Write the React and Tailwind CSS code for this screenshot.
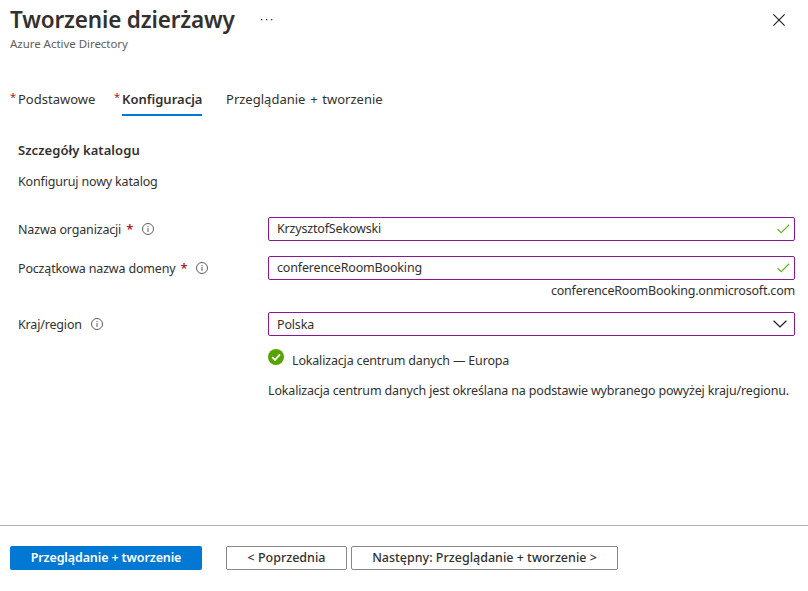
import React from "react";

function InfoIcon() {
  return (
    <svg width="12" height="12" viewBox="0 0 12 12" fill="none" className="shrink-0">
      <circle cx="6" cy="6" r="5.5" stroke="#605e5c" strokeWidth="1" />
      <path d="M6 5v4" stroke="#605e5c" strokeWidth="1" />
      <path d="M6 3v1.1" stroke="#605e5c" strokeWidth="1" />
    </svg>
  );
}

function ValidIcon() {
  return (
    <svg width="13" height="10" viewBox="0 0 13 10" fill="none" className="shrink-0">
      <path d="M0.6 5.2L4.2 8.6L12.2 0.8" stroke="#6bb02c" strokeWidth="1.2" />
    </svg>
  );
}

function Label({ children, required }) {
  return (
    <div className="flex h-6 w-[250px] shrink-0 items-center">
      <span className="pt-0.5">{children}</span>
      {required && <span className="ml-[5px] w-[7px] text-[13px] font-semibold text-[#a4262c]">*</span>}
      <span className="ml-[9px]">
        <InfoIcon />
      </span>
    </div>
  );
}

function Field({ children, icon, className = "" }) {
  return (
    <div className="flex h-6 w-[527px] items-center justify-between rounded-[2px] border border-[#881798] pr-1 pl-2">
      <span className={className}>{children}</span>
      {icon}
    </div>
  );
}

export default function App() {
  return (
    <div className="flex h-[591px] w-[808px] flex-col overflow-hidden bg-white font-['Noto_Sans',sans-serif] text-[12.5px] leading-[18px] tracking-[-0.17px] whitespace-nowrap text-[#323130]">
      <header className="flex h-[54px] justify-between pl-[10px]">
        <div>
          <div className="flex h-[35px] items-center">
            <h1 className="w-[250px] pt-[5px] text-[22.5px] leading-[34px] font-semibold tracking-[-0.16px]">Tworzenie dzierżawy</h1>
            <svg width="14" height="3" viewBox="0 0 14 3" className="mt-1">
              <path d="M1 1h1.3v1.3h-1.3zM6 1h1.3v1.3h-1.3zM11 1h1.3v1.3h-1.3z" fill="#323130" />
            </svg>
          </div>
          <p className="text-[11.5px] tracking-[-0.04px] text-[#605e5c]">Azure Active Directory</p>
        </div>
        <svg width="12" height="12" viewBox="0 0 12 12" className="mt-[14px] mr-[23px]">
          <path d="M0.4 0.4L11.6 11.6M11.6 0.4L0.4 11.6" stroke="#1b1a19" strokeWidth="1.1" />
        </svg>
      </header>

      <nav className="mt-[34px] flex h-7 pl-[10px] text-[13px] tracking-normal">
        <span className="w-2 text-[11px] text-[#a4262c]">*</span>
        <span className="h-7 w-24 pt-0.5">Podstawowe</span>
        <span className="w-2 text-[11px] text-[#a4262c]">*</span>
        <span className="h-7 w-20 border-b-2 border-[#0078d4] pt-0.5 font-semibold">Konfiguracja</span>
        <span className="ml-6 pt-0.5 tracking-[0.01px] [word-spacing:1.3px]">Przeglądanie + tworzenie</span>
      </nav>

      <main className="flex flex-1 flex-col pt-[25px] pl-[18px]">
        <h2 className="text-[13px] font-semibold tracking-[0.07px]">Szczegóły katalogu</h2>
        <p className="mt-[14px]">Konfiguruj nowy katalog</p>
        <div className="mt-[26px] flex">
          <Label required>Nazwa organizacji</Label>
          <Field icon={<ValidIcon />}>KrzysztofSekowski</Field>
        </div>
        <div className="mt-[15px] flex">
          <Label required>Początkowa nazwa domeny</Label>
          <Field icon={<ValidIcon />}>conferenceRoomBooking</Field>
        </div>
        <p className="mt-0.5 mr-[13px] text-right tracking-[-0.2px]">conferenceRoomBooking.onmicrosoft.com</p>
        <div className="mt-3 flex">
          <Label>Kraj/region</Label>
          <Field
            className="pt-px"
            icon={
              <svg width="14" height="8" viewBox="0 0 14 8" fill="none" className="mr-[3px]">
                <path d="M0.6 0.7L7 7L13.4 0.7" stroke="#1b1a19" strokeWidth="1.2" />
              </svg>
            }
          >
            Polska
          </Field>
        </div>
        <div className="mt-[13px] ml-[250px] flex">
          <svg width="16" height="16" viewBox="0 0 16 16" fill="none">
            <circle cx="8" cy="8" r="8" fill="#57a300" />
            <path d="M4.2 8.2L7 11L12 5.4" stroke="#fff" strokeWidth="1.8" />
          </svg>
          <span className="mt-[3px] ml-2">Lokalizacja centrum danych — Europa</span>
        </div>
        <p className="mt-3 ml-[250px] tracking-[-0.16px]">Lokalizacja centrum danych jest określana na podstawie wybranego powyżej kraju/regionu.</p>
      </main>

      <footer className="flex h-[66px] border-t border-[#b3b0ad] pt-5 pl-[10px] font-semibold tracking-[-0.12px]">
        <button className="h-6 w-48 rounded-[2px] bg-[#0078d4] text-white">Przeglądanie + tworzenie</button>
        <button className="ml-6 flex h-6 w-[121px] items-center justify-center rounded-[2px] border border-[#8a8886] font-medium tracking-normal">&lt; Poprzednia</button>
        <button className="ml-1 flex h-6 w-[267px] items-center justify-center rounded-[2px] border border-[#8a8886] font-medium tracking-normal">Następny: Przeglądanie + tworzenie &gt;</button>
      </footer>
    </div>
  );
}
